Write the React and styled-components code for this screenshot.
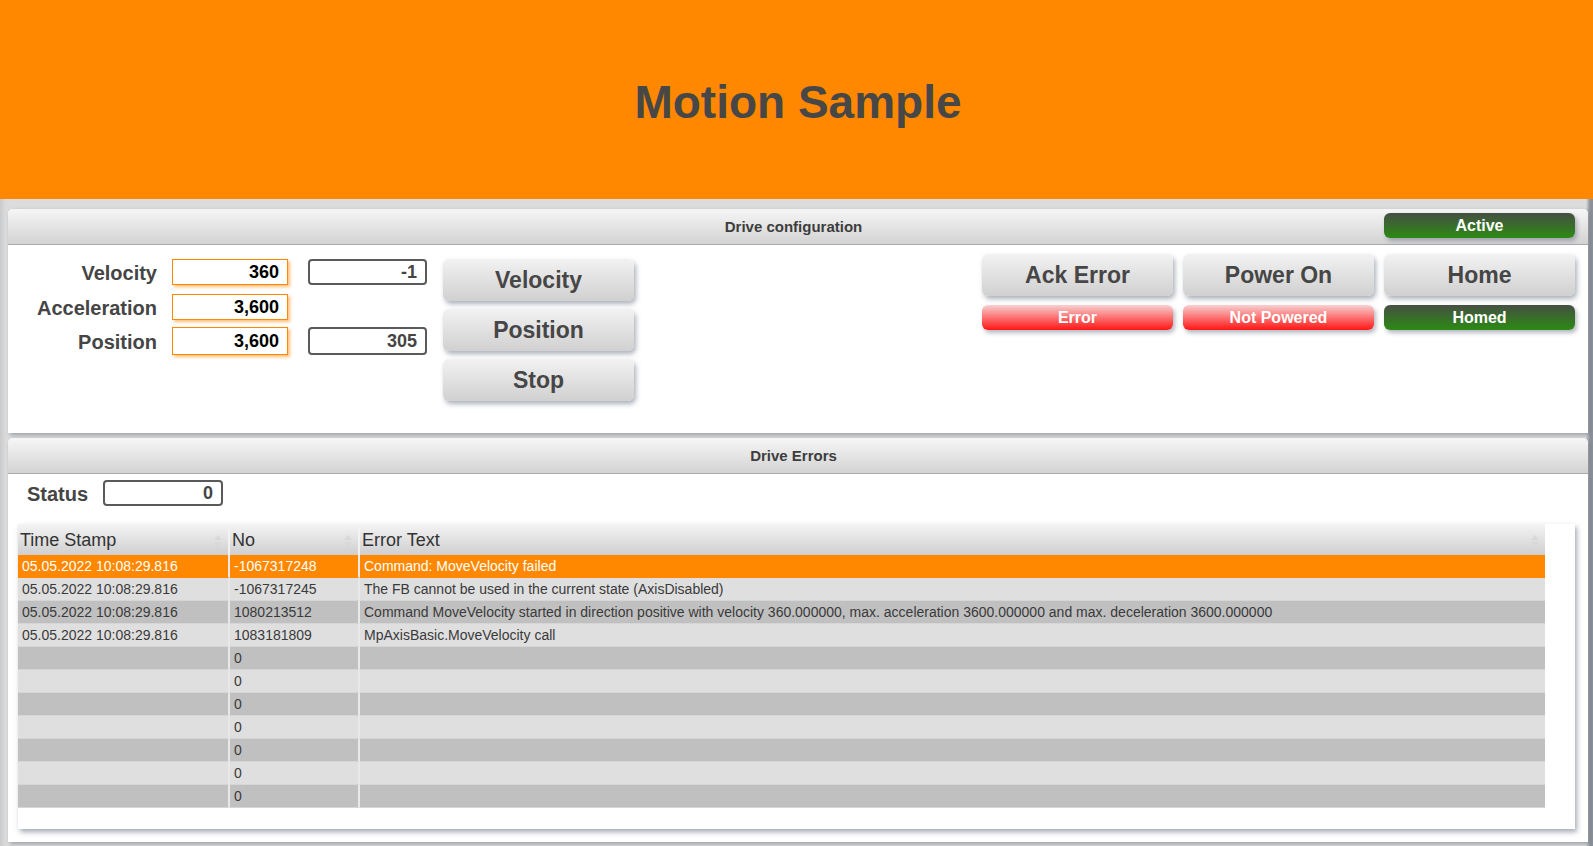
import styled, { createGlobalStyle } from 'styled-components';

const GlobalStyle = createGlobalStyle`
  body {
    margin: 0;
    background: #d6d7d9;
    font-family: "Liberation Sans", Arial, sans-serif;
    overflow: hidden;
  }
`;

const Page = styled.div`
  width: 1593px;
  height: 846px;
  background: linear-gradient(90deg, #c9cacc 0px, #dcdcdc 6px, #dcdcdc 1586px, #8c9199 1590px);
`;

const TitleBar = styled.header`
  height: 199px;
  background: #ff8800;
  display: flex;
  align-items: center;
  justify-content: center;
  margin-bottom: 10px;
`;

const Title = styled.h1`
  margin: 0;
  font-size: 46px;
  font-weight: bold;
  color: #474747;
  padding: 4px 0 0 3px;
`;

const Panel = styled.section`
  margin: 0 5px 5px 8px;
  background: #fff;
  border-radius: 5px 5px 0 0;
  box-shadow: 2px 2px 4px rgba(110, 118, 130, 0.6);
`;

const PanelHeader = styled.div`
  height: 35px;
  border-bottom: 1px solid #a9a9a9;
  border-radius: 5px 5px 0 0;
  background: linear-gradient(#f6f6f6, #d3d3d3);
  display: grid;
  grid-template-columns: 1fr auto 1fr;
  align-items: center;
  padding-right: 13px;
`;

const PanelTitle = styled.div`
  grid-column: 2;
  font-size: 15px;
  font-weight: bold;
  color: #3d3d3d;
  padding-left: 4px;
`;

const Pill = styled.div`
  height: 25px;
  border-radius: 6px;
  display: flex;
  align-items: center;
  justify-content: center;
  color: #fff;
  font-size: 16px;
  font-weight: bold;
  background: ${p =>
    p.$tone === 'red'
      ? 'linear-gradient(#f8d0d0, #ff1414)'
      : 'linear-gradient(#464f43, #2c8a14)'};
  box-shadow: 2px 3px 4px rgba(90, 100, 120, 0.45);
`;

const HeaderPill = styled(Pill)`
  grid-column: 3;
  justify-self: end;
  width: 191px;
  margin-top: -2px;
`;

const ConfigBody = styled.div`
  height: 188px;
  display: flex;
  align-items: flex-start;
  padding: 9px 13px 0 0;
  box-sizing: border-box;
`;

const ParamGrid = styled.div`
  margin-top: 5px;
  display: grid;
  grid-template-columns: 149px 116px 124px;
  grid-auto-rows: 26px;
  column-gap: 15px;
  row-gap: 8.5px;
  align-items: center;
`;

const Label = styled.div`
  text-align: right;
  font-size: 20px;
  font-weight: bold;
  color: #454545;
  padding-top: 3px;
`;

const ValueBox = styled.div`
  box-sizing: border-box;
  height: ${p => (p.$tall ? 28 : 26)}px;
  display: flex;
  align-items: center;
  justify-content: flex-end;
  padding: 1px 8px 0 0;
  font-size: 18px;
  font-weight: bold;
  background: #fff;
`;

const EditBox = styled(ValueBox)`
  width: 116px;
  color: #000;
  border: 1px solid #ff8800;
  box-shadow: 2px 2px 3px rgba(255, 136, 0, 0.55);
`;

const ReadBox = styled(ValueBox)`
  width: 119px;
  margin-left: 5px;
  color: #444;
  border: 2px solid #5a5a5a;
  border-radius: 4px;
`;

const ButtonColumn = styled.div`
  margin-top: 5px;
  margin-left: 16px;
  display: flex;
  flex-direction: column;
  gap: 8px;
`;

const Button = styled.button`
  width: 191px;
  height: 42px;
  border: none;
  border-radius: 6px;
  background: linear-gradient(#f2f2f2, #d0d0d0);
  box-shadow: 2px 3px 5px rgba(90, 100, 120, 0.5);
  font-family: inherit;
  font-size: 23px;
  font-weight: bold;
  color: #464646;
  padding: 0;
`;

const StatusGrid = styled.div`
  margin-left: auto;
  display: grid;
  grid-template-columns: repeat(3, 191px);
  column-gap: 10px;
  row-gap: 9px;
`;

const ErrorsBody = styled.div`
  padding: 6px 13px 13px 10px;
`;

const StatusRow = styled.div`
  display: flex;
  align-items: center;
  gap: 15px;
  padding-left: 9px;
  margin-bottom: 18px;
`;

const StatusBox = styled(ReadBox)`
  margin-left: 0;
  width: 120px;
`;

const TableCard = styled.div`
  height: 305px;
  box-sizing: border-box;
  background: #fff;
  padding: 0 30px 21px 0;
  box-shadow: 2px 3px 5px rgba(90, 100, 120, 0.55);
`;

const Grid = styled.div`
  display: grid;
  grid-template-columns: 212px 130px 1fr;
`;

const HeadCell = styled.div`
  position: relative;
  height: 31px;
  box-sizing: border-box;
  padding: 6px 0 0 2px;
  font-size: 18px;
  color: #333;
  background: linear-gradient(#f4f4f4, #cfcfcf);
  border-right: ${p => (p.$last ? 'none' : '2px solid #f2f2f2')};
`;

const SortIcon = styled.span`
  position: absolute;
  right: 6px;
  top: 11px;
  display: flex;
  flex-direction: column;
  gap: 2px;
  &::before,
  &::after {
    content: '';
    border-left: 4px solid transparent;
    border-right: 4px solid transparent;
  }
  &::before {
    border-bottom: 5px solid #d8d8d8;
  }
  &::after {
    border-top: 5px solid #d8d8d8;
  }
`;

const Cell = styled.div`
  height: 23px;
  box-sizing: border-box;
  padding: 3px 0 0 4px;
  font-size: 14px;
  white-space: nowrap;
  overflow: hidden;
  color: ${p => (p.$selected ? '#fff' : '#3a3a3a')};
  background: ${p => (p.$selected ? '#ff8800' : p.$dark ? '#c0c0c0' : '#dfdfdf')};
  border-bottom: 1px solid ${p => (p.$selected ? '#ff8800' : '#d6d6d6')};
  border-right: ${p => (p.$last ? 'none' : '2px solid #e8e8e8')};
`;

const rows = [
  ['05.05.2022 10:08:29.816', '-1067317248', 'Command: MoveVelocity failed'],
  ['05.05.2022 10:08:29.816', '-1067317245', 'The FB cannot be used in the current state (AxisDisabled)'],
  ['05.05.2022 10:08:29.816', '1080213512', 'Command MoveVelocity started in direction positive with velocity 360.000000, max. acceleration 3600.000000 and max. deceleration 3600.000000'],
  ['05.05.2022 10:08:29.816', '1083181809', 'MpAxisBasic.MoveVelocity call'],
  ['', '0', ''],
  ['', '0', ''],
  ['', '0', ''],
  ['', '0', ''],
  ['', '0', ''],
  ['', '0', ''],
  ['', '0', ''],
];

const heads = ['Time Stamp', 'No', 'Error Text'];

export default function App() {
  return (
    <Page>
      <GlobalStyle />
      <TitleBar>
        <Title>Motion Sample</Title>
      </TitleBar>

      <Panel>
        <PanelHeader>
          <PanelTitle>Drive configuration</PanelTitle>
          <HeaderPill>Active</HeaderPill>
        </PanelHeader>
        <ConfigBody>
          <ParamGrid>
            <Label>Velocity</Label>
            <EditBox>360</EditBox>
            <ReadBox>-1</ReadBox>
            <Label>Acceleration</Label>
            <EditBox>3,600</EditBox>
            <span />
            <Label>Position</Label>
            <EditBox $tall>3,600</EditBox>
            <ReadBox $tall>305</ReadBox>
          </ParamGrid>
          <ButtonColumn>
            <Button>Velocity</Button>
            <Button>Position</Button>
            <Button>Stop</Button>
          </ButtonColumn>
          <StatusGrid>
            <Button>Ack Error</Button>
            <Button>Power On</Button>
            <Button>Home</Button>
            <Pill $tone="red">Error</Pill>
            <Pill $tone="red">Not Powered</Pill>
            <Pill>Homed</Pill>
          </StatusGrid>
        </ConfigBody>
      </Panel>

      <Panel>
        <PanelHeader>
          <PanelTitle>Drive Errors</PanelTitle>
        </PanelHeader>
        <ErrorsBody>
          <StatusRow>
            <Label>Status</Label>
            <StatusBox>0</StatusBox>
          </StatusRow>
          <TableCard>
            <Grid>
              {heads.map((h, i) => (
                <HeadCell key={h} $last={i === 2}>
                  {h}
                  <SortIcon />
                </HeadCell>
              ))}
              {rows.map((r, ri) =>
                r.map((c, ci) => (
                  <Cell
                    key={ri + '-' + ci}
                    $selected={ri === 0}
                    $dark={ri % 2 === 0}
                    $last={ci === 2}
                  >
                    {c}
                  </Cell>
                ))
              )}
            </Grid>
          </TableCard>
        </ErrorsBody>
      </Panel>
    </Page>
  );
}
